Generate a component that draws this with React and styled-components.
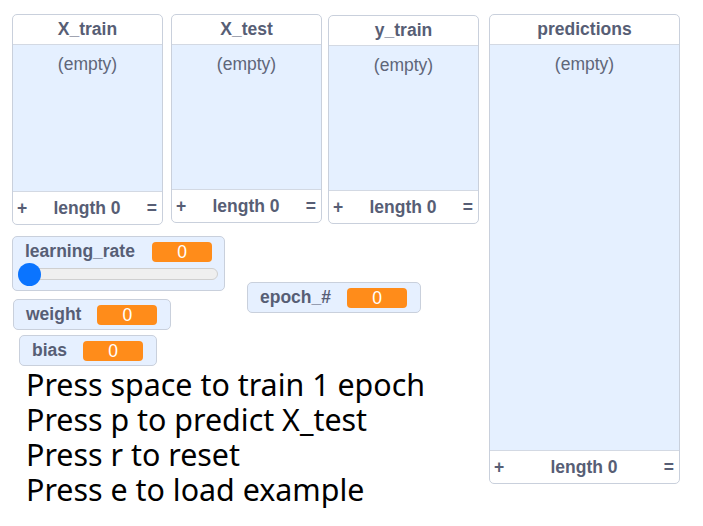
import React from 'react';
import styled, { createGlobalStyle } from 'styled-components';

const GlobalStyle = createGlobalStyle`
	html, body {
		margin: 0;
		padding: 0;
		background: #ffffff;
	}
	body {
		font-family: 'Liberation Sans', Arial, sans-serif;
	}
`;

const lists = [
	{ name: 'X_train', x: 12, y: 14, w: 151, h: 211 },
	{ name: 'X_test', x: 171, y: 14, w: 151, h: 209 },
	{ name: 'y_train', x: 328, y: 15, w: 151, h: 209 },
	{ name: 'predictions', x: 489, y: 14, w: 191, h: 470 },
];

const variables = [
	{ name: 'weight', x: 13, y: 299 },
	{ name: 'bias', x: 19, y: 335 },
	{ name: 'epoch_#', x: 247, y: 282 },
];

const lines = [
	'Press space to train 1 epoch',
	'Press p to predict X_test',
	'Press r to reset',
	'Press e to load example',
];

const ListMonitor = ({ name, x, y, w, h }) => (
	<ListBox style={{ left: x, top: y, width: w, height: h }}>
		<ListHeader>{name}</ListHeader>
		<ListBody>(empty)</ListBody>
		<ListFooter>
			<span>+</span>
			<span>length 0</span>
			<span>=</span>
		</ListFooter>
	</ListBox>
);

const VariableMonitor = ({ name, x, y }) => (
	<VarBox style={{ left: x, top: y }}>
		<VarRow>
			<Label>{name}</Label>
			<Value>0</Value>
		</VarRow>
	</VarBox>
);

export default function App() {
	return (
		<>
			<GlobalStyle />
			<Stage>
				{lists.map((l) => (
					<ListMonitor key={l.name} {...l} />
				))}
				<SliderBox style={{ left: 12, top: 236 }}>
					<SliderRow>
						<Label>learning_rate</Label>
						<Value>0</Value>
					</SliderRow>
					<Track>
						<Thumb />
					</Track>
				</SliderBox>
				{variables.map((v) => (
					<VariableMonitor key={v.name} {...v} />
				))}
				<Instructions>
					{lines.map((line) => (
						<div key={line}>{line}</div>
					))}
				</Instructions>
			</Stage>
		</>
	);
}

const Stage = styled.div`
	position: relative;
	width: 703px;
	height: 526px;
	overflow: hidden;
	background: #ffffff;
	color: #575e75;
`;

const ListBox = styled.div`
	position: absolute;
	box-sizing: border-box;
	display: flex;
	flex-direction: column;
	border: 1px solid #c9d0dc;
	border-radius: 5px;
	overflow: hidden;
	background: #ffffff;
`;

const ListHeader = styled.div`
	height: 29px;
	flex: none;
	display: flex;
	align-items: center;
	justify-content: center;
	font-weight: bold;
	font-size: 17.5px;
	border-bottom: 1px solid #d3d9e3;
`;

const ListBody = styled.div`
	flex: 1;
	background: #e5f0ff;
	text-align: center;
	font-size: 17.5px;
	padding-top: 9px;
	color: #5f6679;
`;

const ListFooter = styled.div`
	height: 31px;
	flex: none;
	display: flex;
	align-items: center;
	justify-content: space-between;
	padding: 1px 5px 0 4px;
	border-top: 1px solid #d3d9e3;
	font-weight: bold;
	font-size: 17.5px;
`;

const VarBox = styled.div`
	position: absolute;
	box-sizing: border-box;
	height: 31px;
	display: flex;
	align-items: center;
	padding: 0 13px 0 12px;
	background: #e6f0ff;
	border: 1px solid #c9d0dc;
	border-radius: 5px;
`;

const VarRow = styled.div`
	display: flex;
	align-items: center;
	gap: 16px;
`;

const SliderBox = styled.div`
	position: absolute;
	box-sizing: border-box;
	width: 213px;
	height: 55px;
	padding: 4px 6px 0 5px;
	background: #e6f0ff;
	border: 1px solid #c9d0dc;
	border-radius: 5px;
	display: flex;
	flex-direction: column;
	gap: 6px;
`;

const SliderRow = styled(VarRow)`
	justify-content: space-between;
	padding: 0 6px 0 7px;
`;

const Label = styled.span`
	font-weight: bold;
	font-size: 17.5px;
	color: #575e75;
`;

const Value = styled.span`
	width: 60px;
	height: 20px;
	border-radius: 4px;
	background: #ff8c1a;
	color: #ffffff;
	font-size: 17.5px;
	line-height: 20px;
	text-align: center;
`;

const Track = styled.div`
	position: relative;
	height: 10px;
	border: 1px solid #cfcfcf;
	border-radius: 6px;
	background: #efefef;
`;

const Thumb = styled.div`
	position: absolute;
	left: -1px;
	top: 50%;
	width: 23px;
	height: 23px;
	margin-top: -11.5px;
	border-radius: 50%;
	background: #0a74ff;
`;

const Instructions = styled.div`
	position: absolute;
	left: 26px;
	top: 367px;
	font-family: 'Noto Sans', 'Open Sans', sans-serif;
	font-size: 30.4px;
	line-height: 35px;
	color: #000000;
`;
